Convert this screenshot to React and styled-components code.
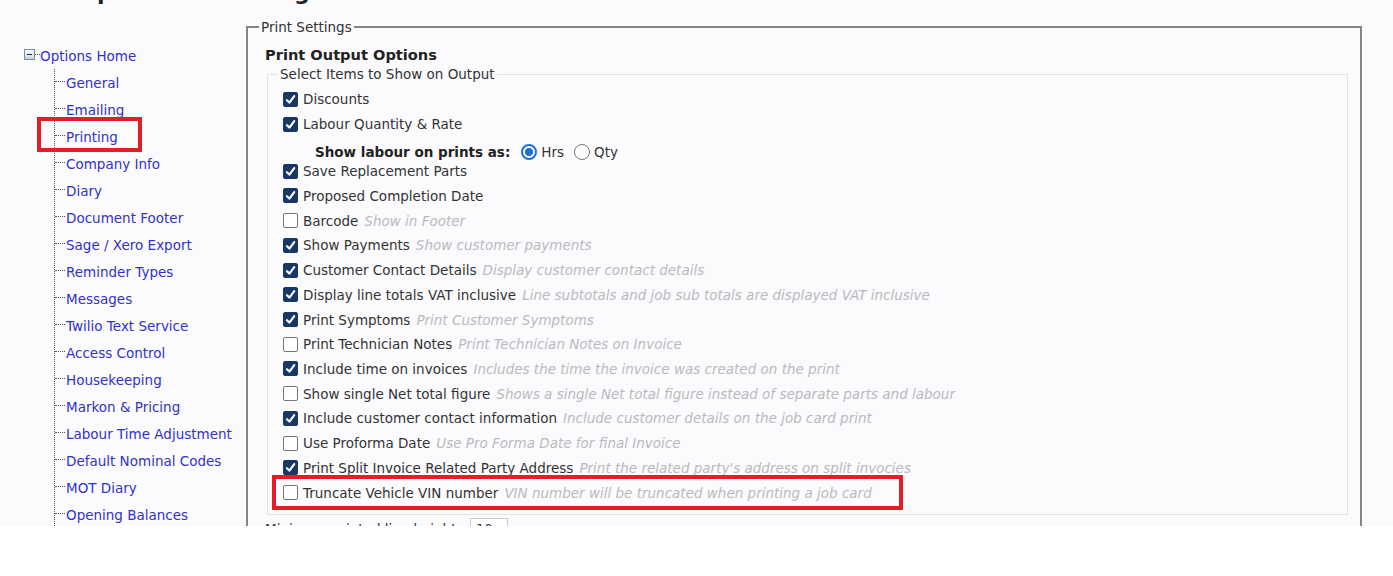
import React from "react";
import styled, { createGlobalStyle } from "styled-components";

const GlobalStyle = createGlobalStyle`
  html, body {
    margin: 0;
    padding: 0;
    background: #ffffff;
  }
  body {
    font-family: "DejaVu Sans", Verdana, sans-serif;
    color: #333333;
  }
`;

const menuItems = [
  "General",
  "Emailing",
  "Printing",
  "Company Info",
  "Diary",
  "Document Footer",
  "Sage / Xero Export",
  "Reminder Types",
  "Messages",
  "Twilio Text Service",
  "Access Control",
  "Housekeeping",
  "Markon & Pricing",
  "Labour Time Adjustment",
  "Default Nominal Codes",
  "MOT Diary",
  "Opening Balances",
];

const options = [
  { label: "Discounts", checked: true },
  { label: "Labour Quantity & Rate", checked: true, radios: true },
  { label: "Save Replacement Parts", checked: true },
  { label: "Proposed Completion Date", checked: true },
  { label: "Barcode", hint: "Show in Footer" },
  { label: "Show Payments", hint: "Show customer payments", checked: true },
  { label: "Customer Contact Details", hint: "Display customer contact details", checked: true },
  {
    label: "Display line totals VAT inclusive",
    hint: "Line subtotals and job sub totals are displayed VAT inclusive",
    checked: true,
  },
  { label: "Print Symptoms", hint: "Print Customer Symptoms", checked: true },
  { label: "Print Technician Notes", hint: "Print Technician Notes on Invoice" },
  {
    label: "Include time on invoices",
    hint: "Includes the time the invoice was created on the print",
    checked: true,
  },
  {
    label: "Show single Net total figure",
    hint: "Shows a single Net total figure instead of separate parts and labour",
  },
  {
    label: "Include customer contact information",
    hint: "Include customer details on the job card print",
    checked: true,
  },
  { label: "Use Proforma Date", hint: "Use Pro Forma Date for final Invoice" },
  {
    label: "Print Split Invoice Related Party Address",
    hint: "Print the related party's address on split invocies",
    checked: true,
  },
  {
    label: "Truncate Vehicle VIN number",
    hint: "VIN number will be truncated when printing a job card",
    marked: true,
  },
];

function App() {
  return (
    <>
      <GlobalStyle />
      <Page>
        <Title>Setup Module Settings</Title>
        <Main>
          <Sidebar>
            <TreeRoot>
              <Toggle>
                <span />
              </Toggle>
              <RootStub />
              <TreeLink>Options Home</TreeLink>
            </TreeRoot>
            <TreeChildren>
              {menuItems.map((item) => (
                <TreeItem key={item} $marked={item === "Printing"}>
                  <TreeLink>{item}</TreeLink>
                </TreeItem>
              ))}
            </TreeChildren>
          </Sidebar>

          <Panel>
            <OuterSet>
              <OuterLegend>Print Settings</OuterLegend>
              <Heading>Print Output Options</Heading>
              <InnerSet>
                <InnerLegend>Select Items to Show on Output</InnerLegend>
                <OptionList>
                  {options.map((opt) => (
                    <React.Fragment key={opt.label}>
                      <OptionRow $marked={opt.marked}>
                        <Check $checked={opt.checked}>
                          {opt.checked && (
                            <svg width="11" height="11" viewBox="0 0 10 10">
                              <path
                                d="M1.8 5.6 L4 7.8 L8.4 2"
                                fill="none"
                                stroke="#fff"
                                strokeWidth="2"
                                strokeLinecap="round"
                                strokeLinejoin="round"
                              />
                            </svg>
                          )}
                        </Check>
                        <Label>{opt.label}</Label>
                        {opt.hint && <Hint>{opt.hint}</Hint>}
                      </OptionRow>
                      {opt.radios && (
                        <RadioRow>
                          <RadioTitle>Show labour on prints as:</RadioTitle>
                          <Radio $on />
                          <RadioLabel>Hrs</RadioLabel>
                          <Radio />
                          <RadioLabel>Qty</RadioLabel>
                        </RadioRow>
                      )}
                    </React.Fragment>
                  ))}
                </OptionList>
              </InnerSet>
              <ExtraRow>
                <Label>Minimum printed line height:</Label>
                <SmallInput>10</SmallInput>
              </ExtraRow>
            </OuterSet>
          </Panel>
        </Main>
      </Page>
    </>
  );
}

export default App;

const Page = styled.div`
  width: 1393px;
  height: 526px;
  overflow: hidden;
  background: #fbfbfd;
`;

const Title = styled.h1`
  margin: -20px 0 0 40px;
  height: 26px;
  font-size: 22px;
  line-height: 26px;
  font-weight: bold;
  color: #222;
  white-space: nowrap;
`;

const Main = styled.div`
  display: flex;
  margin-top: 13px;
`;

const Sidebar = styled.nav`
  width: 246px;
  flex: none;
  padding-top: 23px;
  box-sizing: border-box;
  font-size: 13.5px;
`;

const TreeRoot = styled.div`
  display: flex;
  align-items: center;
  height: 27px;
  padding-left: 24px;
`;

const Toggle = styled.span`
  width: 9px;
  height: 9px;
  border: 1px solid #7a8aa0;
  background: linear-gradient(#ffffff, #c9d3e0);
  display: flex;
  align-items: center;
  justify-content: center;
  margin-top: -3px;

  span {
    width: 5px;
    height: 1px;
    background: #1d2a44;
  }
`;

const RootStub = styled.span`
  width: 5px;
  border-top: 1px dotted #555;
  margin-top: -3px;
`;

const TreeLink = styled.a`
  color: #3232c8;
  text-decoration: none;
  white-space: nowrap;
  cursor: pointer;
`;

const TreeChildren = styled.div`
  margin-left: 54px;
  border-left: 1px dotted #555;
`;

const TreeItem = styled.div`
  position: relative;
  display: flex;
  align-items: center;
  height: 27px;

  &::before {
    content: "";
    width: 10px;
    border-top: 1px dotted #555;
    margin-right: 1px;
    margin-top: -3px;
  }

  ${(p) =>
    p.$marked &&
    `
    &::after {
      content: "";
      position: absolute;
      left: -18px;
      top: -6px;
      width: 105px;
      height: 35px;
      box-sizing: border-box;
      border: 4px solid #e51d25;
    }
  `}
`;

const Panel = styled.main`
  flex: 1;
  margin-right: 31px;
`;

const OuterSet = styled.fieldset`
  margin: 0;
  padding: 0 12px 0 17px;
  border: 2px solid #858585;
  min-height: 560px;
`;

const OuterLegend = styled.legend`
  margin-left: -6px;
  padding: 0 2px;
  font-size: 13.5px;
  line-height: 16px;
  color: #333;
`;

const Heading = styled.h2`
  margin: 11px 0 0;
  font-size: 14.6px;
  line-height: 18px;
  font-weight: bold;
  color: #222;
`;

const InnerSet = styled.fieldset`
  margin: 2px 0 0 2px;
  padding: 5px 0 9px 16px;
  border: 1px solid #e3e3e6;
`;

const InnerLegend = styled.legend`
  margin-left: -6px;
  padding: 0 2px;
  font-size: 13.5px;
  line-height: 16px;
  color: #333;
`;

const OptionList = styled.div`
  display: flex;
  flex-direction: column;
`;

const OptionRow = styled.div`
  position: relative;
  display: flex;
  align-items: center;
  height: 24.72px;
  font-size: 13.5px;
  white-space: nowrap;

  ${(p) =>
    p.$marked &&
    `
    &::after {
      content: "";
      position: absolute;
      left: -12px;
      top: -5px;
      width: 631px;
      height: 35px;
      box-sizing: border-box;
      border: 4px solid #e51d25;
    }
  `}
`;

const Check = styled.span`
  width: 15px;
  height: 15px;
  flex: none;
  box-sizing: border-box;
  border-radius: 2px;
  margin: 0 5px 0 -1px;
  display: flex;
  align-items: center;
  justify-content: center;
  background: ${(p) => (p.$checked ? "#173866" : "#ffffff")};
  border: 1px solid ${(p) => (p.$checked ? "#173866" : "#767676")};
`;

const Label = styled.span`
  color: #333;
`;

const Hint = styled.span`
  margin-left: 6px;
  color: #b9b9bd;
  font-style: italic;
`;

const RadioRow = styled.div`
  display: flex;
  align-items: center;
  height: 22.4px;
  padding: 8px 0 0 31px;
  box-sizing: border-box;
  font-size: 13.5px;
  white-space: nowrap;
`;

const RadioTitle = styled.span`
  font-weight: bold;
  color: #222;
  margin-right: 11px;
`;

const Radio = styled.span`
  width: 16px;
  height: 16px;
  box-sizing: border-box;
  border-radius: 50%;
  flex: none;
  margin-right: 4px;
  border: ${(p) => (p.$on ? "2px solid #1b6fe0" : "1px solid #767676")};
  background: ${(p) =>
    p.$on ? "radial-gradient(circle, #1b6fe0 0 3.8px, #fff 4.3px)" : "#fff"};
`;

const RadioLabel = styled.span`
  color: #333;
  margin-right: 10px;
`;

const ExtraRow = styled.div`
  display: flex;
  align-items: center;
  gap: 9px;
  margin-top: 3px;
  font-size: 13.5px;
`;

const SmallInput = styled.span`
  width: 38px;
  height: 22px;
  box-sizing: border-box;
  border: 1px solid #c8c8c8;
  background: #fff;
  padding: 2px 5px;
  font-size: 13px;
`;
